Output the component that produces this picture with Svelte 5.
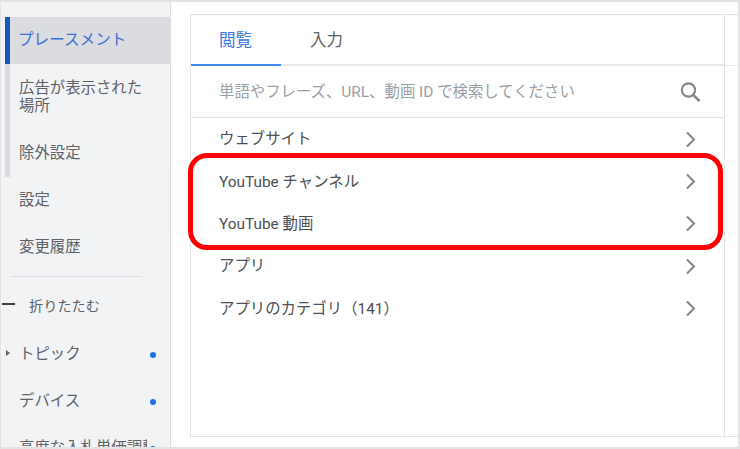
<script>
  const nav = [
    { label: 'プレースメント', cls: 'active rail' },
    { label: '広告が表示された場所', cls: 'tall rail' },
    { label: '除外設定', cls: 'rail' },
    { label: '設定', cls: '' },
    { label: '変更履歴', cls: '' }
  ];
  const rows = ['ウェブサイト', 'YouTube チャンネル', 'YouTube 動画', 'アプリ', 'アプリのカテゴリ（141）'];
</script>

<div class="frame">
  <aside class="side">
    <ul class="nav">
      {#each nav as item}
        <li class="item {item.cls}"><span>{item.label}</span></li>
      {/each}
    </ul>
    <div class="rule"></div>
    <div class="collapse"><i class="minus"></i><span>折りたたむ</span></div>
    <div class="extra"><i class="tri"></i><span>トピック</span><b class="dot"></b></div>
    <div class="extra"><span>デバイス</span><b class="dot"></b></div>
    <div class="extra"><span>高度な入札単価調整</span><b class="dot"></b></div>
  </aside>

  <main class="main">
    <section class="card">
      <div class="panel">
        <nav class="tabs">
          <div class="tab on">閲覧</div>
          <div class="tab">入力</div>
        </nav>
        <div class="search">
          <span>単語やフレーズ、URL、動画 ID で検索してください</span>
          <svg width="26" height="26" viewBox="0 0 26 26" fill="none" stroke="#80868b">
            <circle cx="11.5" cy="11" r="6.6" stroke-width="2.2" />
            <path d="M16.2 15.8 L22.6 22.2" stroke-width="2.6" />
          </svg>
        </div>
        <ul class="rows">
          {#each rows as r}
            <li class="row">
              <span>{r}</span>
              <svg width="12" height="17" viewBox="0 0 12 17" fill="none" stroke="#80868b" stroke-width="2">
                <path d="M2 1.5 L9 8.5 L2 15.5" />
              </svg>
            </li>
          {/each}
        </ul>
      </div>
      <div class="gutter">
        <div class="gutter-top"></div>
      </div>
      <div class="mark"></div>
    </section>
  </main>
</div>

<style>
  :global(body) {
    margin: 0;
    background: #fff;
  }
  ul {
    list-style: none;
    margin: 0;
    padding: 0;
  }
  .frame {
    box-sizing: border-box;
    width: 740px;
    height: 449px;
    overflow: hidden;
    display: flex;
    border-top: 2px solid #e3e3e3;
    border-left: 1px solid #e3e3e3;
    border-right: 2px solid #e3e3e3;
    border-bottom: 2px solid #e3e3e3;
    font-family: Roboto, "Noto Sans CJK JP", sans-serif;
    color: #5f6368;
  }
  .side {
    box-sizing: border-box;
    flex: 0 0 170px;
    height: 500px;
    padding-top: 15px;
    background: #f1f3f4;
    border-right: 1px solid #dadce0;
    font-size: 15.4px;
  }
  .nav {
    padding-left: 4px;
  }
  .item {
    box-sizing: border-box;
    height: 47px;
    display: flex;
    align-items: center;
    padding: 0 22px 0 9px;
    border-left: 5px solid transparent;
    line-height: 18px;
  }
  .item span {
    padding-bottom: 1px;
  }
  .rail {
    border-left-color: #dadce0;
  }
  .tall {
    height: 66px;
  }
  .tall span {
    padding: 0;
  }
  .active {
    background: #dadce0;
    border-left-color: #1558c0;
    color: #3b6fd6;
    font-size: 15.6px;
    padding-left: 8px;
  }
  .active span {
    padding-bottom: 2px;
  }
  .rule {
    width: 131px;
    height: 1px;
    margin: 5px 0 6px 10px;
    background: #dfe1e5;
  }
  .collapse {
    height: 47px;
    display: flex;
    align-items: center;
    gap: 14px;
    padding-left: 1px;
    font-size: 14.2px;
  }
  .collapse span {
    padding-bottom: 4px;
  }
  .minus {
    width: 13px;
    height: 2px;
    margin-bottom: 5px;
    background: #3c4043;
  }
  .extra {
    position: relative;
    box-sizing: border-box;
    width: 160px;
    height: 47px;
    display: flex;
    align-items: center;
    padding-left: 18px;
    white-space: nowrap;
    overflow: hidden;
  }
  .extra span {
    display: block;
    width: 128px;
    overflow: hidden;
    padding-bottom: 4px;
  }
  .tri {
    position: absolute;
    left: 5px;
    top: 20px;
    border-left: 4px solid #5f6368;
    border-top: 3px solid transparent;
    border-bottom: 3px solid transparent;
  }
  .dot {
    position: absolute;
    left: 149px;
    top: 22px;
    width: 6px;
    height: 6px;
    border-radius: 50%;
    background: #1a73e8;
  }
  .main {
    flex: 1;
    min-width: 0;
    padding: 12px 0 0 19px;
  }
  .card {
    position: relative;
    box-sizing: border-box;
    height: 423px;
    display: flex;
    border-top: 1px solid #e3e3e3;
    border-left: 1px solid #e3e3e3;
    border-bottom: 1px solid #e3e3e3;
  }
  .panel {
    flex: 0 0 533px;
    border-right: 1px solid #e3e3e3;
  }
  .gutter {
    flex: 1;
  }
  .gutter-top {
    height: 50px;
    border-bottom: 1px solid #e8eaed;
  }
  .tabs {
    box-sizing: border-box;
    height: 51px;
    display: flex;
    border-bottom: 2px solid #e8eaed;
    font-size: 16.5px;
  }
  .tab {
    box-sizing: border-box;
    width: 90px;
    height: 51px;
    padding: 0 0 0 28px;
    line-height: 52px;
  }
  .tab + .tab {
    padding-left: 29px;
  }
  .tab.on {
    color: #3b78e7;
    border-bottom: 2px solid #4285f4;
  }
  .search {
    box-sizing: border-box;
    height: 52px;
    display: flex;
    align-items: center;
    justify-content: space-between;
    padding: 0 21px 0 28px;
    border-bottom: 1px solid #e3e3e3;
    font-size: 15.4px;
    color: #9aa0a6;
  }
  .search span {
    padding-bottom: 3px;
  }
  .row {
    box-sizing: border-box;
    height: 42.4px;
    display: flex;
    align-items: center;
    justify-content: space-between;
    padding: 0 27px 0 28px;
    font-size: 15.4px;
    color: #4d5156;
  }
  .row span {
    padding-bottom: 4px;
  }
  .mark {
    position: absolute;
    left: -3px;
    top: 138px;
    box-sizing: border-box;
    width: 535px;
    height: 96.5px;
    border: 5px solid #ff0000;
    border-radius: 19px;
  }
</style>
